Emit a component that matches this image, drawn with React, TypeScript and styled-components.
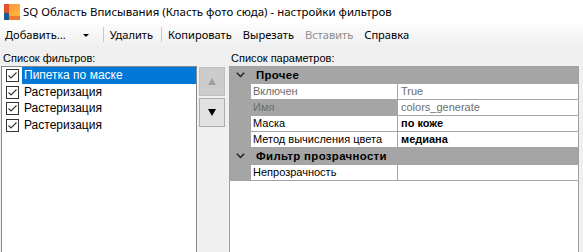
import React from "react"
import styled, {createGlobalStyle} from "styled-components"

const GlobalStyle = createGlobalStyle`
  html, body {
    margin: 0;
    padding: 0;
    background: #f0f0f0;
  }
  #root {
    width: 583px;
    height: 252px;
    overflow: hidden;
  }
`

const filters = [
    {name: "Пипетка по маске", selected: true},
    {name: "Растеризация", selected: false},
    {name: "Растеризация", selected: false},
    {name: "Растеризация", selected: false},
]

type Prop = {name: string, value: string, readOnly?: boolean, bold?: boolean, active?: boolean}
type Category = {title: string, props: Prop[]}

const params: Category[] = [
    {
        title: "Прочее",
        props: [
            {name: "Включен", value: "True", readOnly: true},
            {name: "Имя", value: "colors_generate", readOnly: true, active: true},
            {name: "Маска", value: "по коже", bold: true},
            {name: "Метод вычисления цвета", value: "медиана", bold: true},
        ]
    },
    {
        title: "Фильтр прозрачности",
        props: [
            {name: "Непрозрачность", value: ""},
        ]
    },
]

export default function App() {
    return (
        <Window>
            <GlobalStyle/>
            <TitleBar>
                <AppIcon width="16" height="16" viewBox="0 0 16 16">
                    <defs>
                        <linearGradient id="ig" x1="0" y1="0" x2="1" y2="1">
                            <stop offset="0" stopColor="#ff8a3a"/>
                            <stop offset="1" stopColor="#ffc23d"/>
                        </linearGradient>
                    </defs>
                    <rect x="0" y="0" width="16" height="16" fill="url(#ig)"/>
                    <rect x="0" y="0" width="5" height="16" fill="#e0542a"/>
                    <rect x="0" y="9" width="5" height="7" fill="#1d5a8c"/>
                    <rect x="5" y="12" width="11" height="4" fill="#f07a30"/>
                </AppIcon>
                <TitleText>SQ Область Вписывания (Класть фото сюда) - настройки фильтров</TitleText>
            </TitleBar>
            <MenuStrip>
                <MenuItem>Добавить...</MenuItem>
                <DropArrow/>
                <MenuSeparator/>
                <MenuItem>Удалить</MenuItem>
                <MenuSeparator/>
                <MenuItem>Копировать</MenuItem>
                <MenuItem>Вырезать</MenuItem>
                <MenuItem disabled>Вставить</MenuItem>
                <MenuItem>Справка</MenuItem>
            </MenuStrip>
            <Body>
                <LeftPanel>
                    <Caption>Список фильтров:</Caption>
                    <ListRow>
                        <FilterList>
                            {filters.map((f, i) => (
                                <FilterItem key={i}>
                                    <CheckBox>
                                        <svg width="11" height="11" viewBox="0 0 11 11">
                                            <path d="M1.5 5.5 L4 8 L9.5 2.5" fill="none" stroke="#333" strokeWidth="1.1"/>
                                        </svg>
                                    </CheckBox>
                                    <FilterLabel selected={f.selected}>{f.name}</FilterLabel>
                                </FilterItem>
                            ))}
                        </FilterList>
                        <MoveButtons>
                            <MoveButton disabled>
                                <Arrow up disabled/>
                            </MoveButton>
                            <MoveButton>
                                <Arrow/>
                            </MoveButton>
                        </MoveButtons>
                    </ListRow>
                </LeftPanel>
                <RightPanel>
                    <Caption>Список параметров:</Caption>
                    <Grid>
                        {params.map((c, ci) => (
                            <React.Fragment key={ci}>
                                <CategoryRow>
                                    <Chevron width="9" height="6" viewBox="0 0 9 6">
                                        <path d="M0.8 0.8 L4.5 4.5 L8.2 0.8" fill="none" stroke="#222" strokeWidth="1.5"/>
                                    </Chevron>
                                    <CategoryTitle>{c.title}</CategoryTitle>
                                </CategoryRow>
                                {c.props.map((p, pi) => (
                                    <PropRow key={pi}>
                                        <PropName active={p.active} readOnly={p.readOnly}>{p.name}</PropName>
                                        <PropValue readOnly={p.readOnly} bold={p.bold}>{p.value}</PropValue>
                                    </PropRow>
                                ))}
                            </React.Fragment>
                        ))}
                    </Grid>
                </RightPanel>
            </Body>
        </Window>
    )
}

const Window = styled.div`
  width: 583px;
  height: 252px;
  display: flex;
  flex-direction: column;
  background: #f0f0f0;
  font-family: "Liberation Sans", Arial, sans-serif;
  font-size: 11px;
  color: #000;
`

const TitleBar = styled.div`
  height: 23px;
  flex: none;
  display: flex;
  align-items: center;
  background: #fff;
  padding-left: 4px;
`

const AppIcon = styled.svg`
  flex: none;
  margin-right: 3px;
`

const TitleText = styled.div`
  font-family: "Noto Sans", "Open Sans", sans-serif;
  font-size: 11.45px;
  color: #000;
  white-space: nowrap;
`

const MenuStrip = styled.div`
  height: 23px;
  flex: none;
  display: flex;
  align-items: center;
  background: linear-gradient(#fdfdfd, #f0f0f0);
  font-family: "Noto Sans", "Open Sans", sans-serif;
  font-size: 11.1px;
`

const MenuItem = styled.div<{disabled?: boolean}>`
  padding: 0 6px 0 5px;
  color: ${p => p.disabled ? "#8d8d8d" : "#000"};
  white-space: nowrap;
`

const DropArrow = styled.div`
  width: 0;
  height: 0;
  margin: 1px 12px 0 11px;
  border-left: 3px solid transparent;
  border-right: 3px solid transparent;
  border-top: 3px solid #000;
`

const MenuSeparator = styled.div`
  width: 1px;
  height: 15px;
  background: #c8c8c8;
  margin: 0 1px 0 2px;
`

const Body = styled.div`
  flex: 1;
  display: flex;
  min-height: 0;
`

const LeftPanel = styled.div`
  width: 228px;
  flex: none;
  display: flex;
  flex-direction: column;
  padding-left: 1px;
`

const Caption = styled.div`
  height: 20px;
  flex: none;
  padding-left: 2px;
  line-height: 13px;
  box-sizing: border-box;
  padding-top: 6px;
  white-space: nowrap;
`

const ListRow = styled.div`
  flex: 1;
  display: flex;
  gap: 2px;
  min-height: 0;
`

const FilterList = styled.div`
  width: 196px;
  box-sizing: border-box;
  border: 1px solid #828790;
  border-bottom: none;
  background: #fff;
  display: flex;
  flex-direction: column;
`

const FilterItem = styled.div`
  height: 16.7px;
  display: flex;
  align-items: center;
  padding-left: 4px;
`

const CheckBox = styled.div`
  width: 13px;
  height: 13px;
  box-sizing: border-box;
  border: 1px solid #333;
  background: #fff;
  display: flex;
  align-items: center;
  justify-content: center;
  margin-right: 3px;
`

const FilterLabel = styled.div<{selected?: boolean}>`
  flex: 1;
  height: 17px;
  line-height: 17px;
  padding-left: 2px;
  font-size: 12px;
  background: ${p => p.selected ? "#0078d7" : "transparent"};
  color: ${p => p.selected ? "#fff" : "#000"};
  white-space: nowrap;
`

const MoveButtons = styled.div`
  display: flex;
  flex-direction: column;
  gap: 2px;
  padding-top: 1px;
`

const MoveButton = styled.div<{disabled?: boolean}>`
  width: 26px;
  height: 29px;
  box-sizing: border-box;
  border: 1px solid ${p => p.disabled ? "#bfbfbf" : "#adadad"};
  background: ${p => p.disabled ? "#cccccc" : "#e1e1e1"};
  display: flex;
  align-items: center;
  justify-content: center;
`

const Arrow = styled.div<{up?: boolean, disabled?: boolean}>`
  width: 0;
  height: 0;
  border-left: 4px solid transparent;
  border-right: 4px solid transparent;
  ${p => p.up
    ? `border-bottom: 7px solid ${p.disabled ? "#a0a0a0" : "#000"};`
    : `border-top: 7px solid ${p.disabled ? "#a0a0a0" : "#000"};`}
`

const RightPanel = styled.div`
  width: 350px;
  flex: none;
  display: flex;
  flex-direction: column;
`

const Grid = styled.div`
  flex: 1;
  box-sizing: border-box;
  border: 1px solid #a0a0a0;
  border-bottom: none;
  background: #fff;
  display: flex;
  flex-direction: column;
`

const CategoryRow = styled.div`
  height: 16px;
  flex: none;
  display: flex;
  align-items: center;
  background: #a5a5a5;
  border-bottom: 1px solid #a5a5a5;
`

const Chevron = styled.svg`
  margin-left: 6px;
  margin-right: 11px;
`

const CategoryTitle = styled.div`
  font-weight: bold;
  font-size: 11.4px;
  letter-spacing: 0.35px;
  white-space: nowrap;
`

const PropRow = styled.div`
  height: 16px;
  flex: none;
  display: flex;
  border-left: 21px solid #a5a5a5;
  border-bottom: 1px solid #a5a5a5;
  box-sizing: border-box;
`

const PropName = styled.div<{active?: boolean, readOnly?: boolean}>`
  width: 144px;
  flex: none;
  border-right: 1px solid #a5a5a5;
  padding-left: 2px;
  line-height: 15px;
  background: ${p => p.active ? "#a5a5a5" : "#fff"};
  color: ${p => p.readOnly ? "#6d6d6d" : "#000"};
  white-space: nowrap;
  overflow: hidden;
`

const PropValue = styled.div<{readOnly?: boolean, bold?: boolean}>`
  flex: 1;
  padding-left: 3px;
  line-height: 15px;
  color: ${p => p.readOnly ? "#6d6d6d" : "#000"};
  font-weight: ${p => p.bold ? "bold" : "normal"};
  white-space: nowrap;
`
